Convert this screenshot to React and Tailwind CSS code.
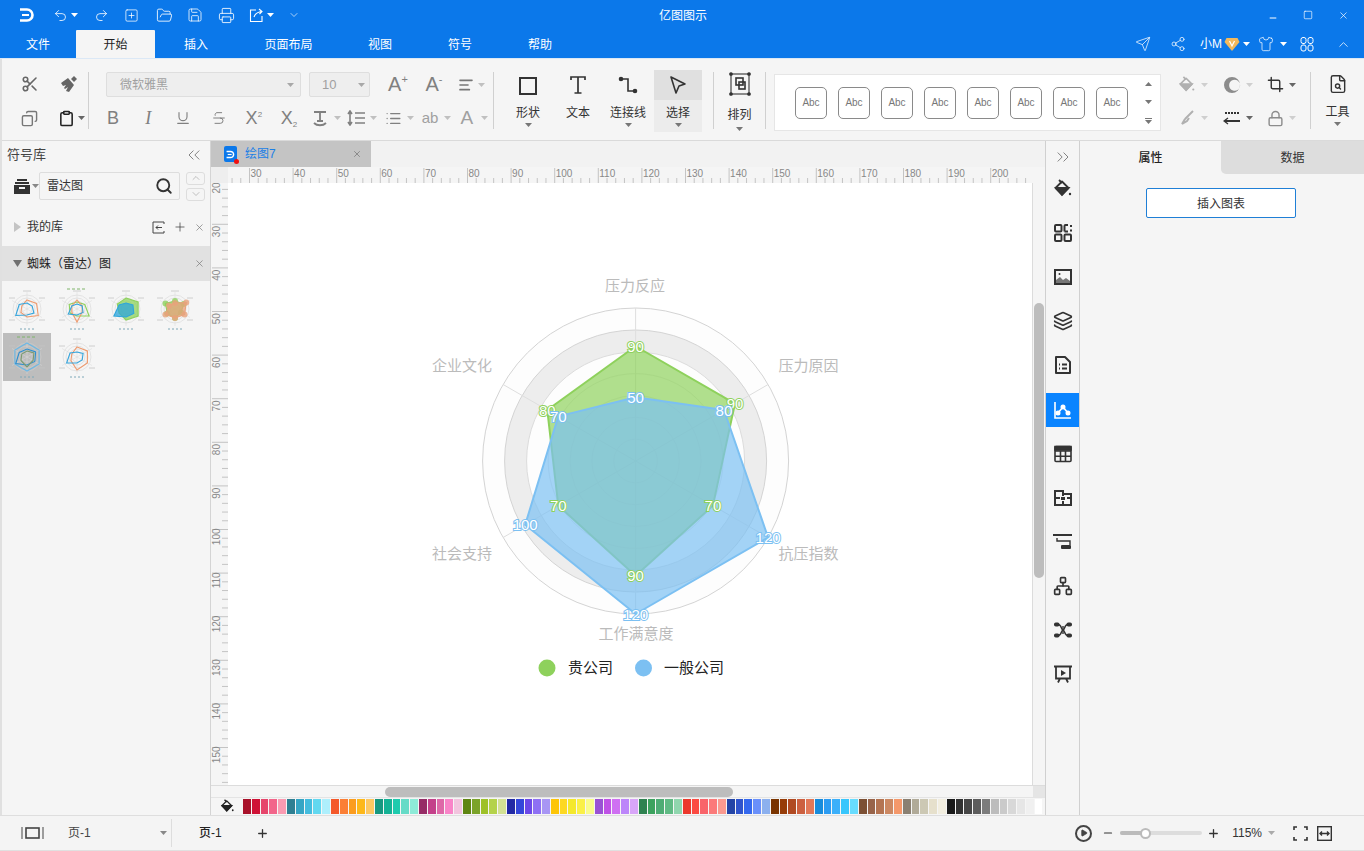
import {
    Scissors, Copy, Undo2, Redo2, SquarePlus, FolderOpen, Save, Printer, Send, Share2, Shirt, ChevronUp, Minus, Square, X,
    Underline, Strikethrough, AlignLeft, List, Search, ChevronsLeft, ChevronsRight, ChevronDown, Plus, Layers, Network,
    Crop, Lock, Clipboard, FileSearch, Play,
} from 'lucide-react';

const Caret = ({ className = 'fill-[#a8a8a8]' }) => (
    <svg width="7" height="4" viewBox="0 0 7 4" className={`shrink-0 ${className}`}><path d="M0 0h7L3.5 4z" /></svg>
);

const Logo = ({ size = 16, color = '#fff' }) => (
    <svg width={size} height={size} viewBox="0 0 16 16" fill="none" stroke={color} strokeWidth="2.6">
        <path d="M1 2.5h7a5.5 5.5 0 0 1 0 11H1" />
        <path d="M3 8h7" strokeWidth="2" />
    </svg>
);

const Bucket = ({ size = 20, color = '#333' }) => (
    <svg width={size} height={size} viewBox="0 0 20 20" fill="none" stroke={color} strokeWidth="1.8">
        <path d="M9 2.5 15.5 9 9 15.5 2.5 9z" strokeLinejoin="round" />
        <path d="M3 9h12.5L9 16z" fill={color} />
        <path d="M6 1l3 3" />
        <circle cx="17" cy="15" r="1.2" fill={color} stroke="none" />
    </svg>
);

// icons of the right strip
const IconGrid = () => (
    <svg width="20" height="20" viewBox="0 0 20 20" fill="none" stroke="#333" strokeWidth="2">
        <rect x="2" y="2" width="6.5" height="6.5" rx="1" />
        <rect x="2" y="11.5" width="6.5" height="6.5" rx="1" />
        <rect x="11.5" y="11.5" width="6.5" height="6.5" rx="1" />
        <path d="M11.5 8.5V3a1 1 0 0 1 1-1H15M18 2v2M18 6.5v2M11.5 8.5H15" />
    </svg>
);
const IconImage = () => (
    <svg width="20" height="20" viewBox="0 0 20 20" fill="none" stroke="#333" strokeWidth="2">
        <rect x="2" y="3" width="16" height="14" />
        <path d="M3 16v-3l4-3 3 3 3-2 4 3v2z" fill="#777" stroke="none" />
        <circle cx="6.5" cy="7" r="1" fill="#333" stroke="none" />
    </svg>
);
const IconDoc = () => (
    <svg width="20" height="20" viewBox="0 0 20 20" fill="none" stroke="#333" strokeWidth="2">
        <path d="M3 2h9l5 5v11H3z" strokeLinejoin="round" />
        <path d="M6 9.5h1M9 9.5h5M6 13.5h1M9 13.5h5" />
    </svg>
);
const IconChart = () => (
    <svg width="20" height="20" viewBox="0 0 20 20" fill="none" stroke="#fff" strokeWidth="1.6">
        <path d="M2 2v16h16" />
        <path d="M5 13l5-6 5 6" />
        <circle cx="5" cy="13" r="1.7" fill="#fff" />
        <circle cx="10" cy="7" r="1.7" fill="#fff" />
        <circle cx="15" cy="13" r="1.7" fill="#fff" />
    </svg>
);
const IconTable = () => (
    <svg width="20" height="20" viewBox="0 0 20 20" fill="none" stroke="#333" strokeWidth="1.6">
        <rect x="2" y="2.5" width="16" height="15" rx="1" />
        <path d="M2 7h16M2 12.2h16M7.500 7v10.500M12.500 7v10.500" />
        <path d="M2 2.5h16V6H2z" fill="#333" />
    </svg>
);
const IconBlocks = () => (
    <svg width="20" height="20" viewBox="0 0 20 20" fill="none" stroke="#333" strokeWidth="2">
        <path d="M2 3h8v3h8v11H2z" />
        <path d="M2 10h5M14 10h4M10 13v4M10 6v2" />
        <rect x="8" y="9" width="4" height="3" fill="#333" stroke="none" />
    </svg>
);
const IconGantt = () => (
    <svg width="20" height="20" viewBox="0 0 20 20" fill="none" stroke="#333" strokeWidth="2">
        <path d="M1 4V3h17v1" />
        <path d="M4 6v3h13v4" strokeWidth="1.4" />
        <rect x="8" y="13" width="10" height="4" rx="1" fill="#333" stroke="none" />
    </svg>
);
const IconMind = () => (
    <svg width="20" height="20" viewBox="0 0 20 20" fill="none" stroke="#333" strokeWidth="1.4">
        <path d="M5 4.500c4 0 3 5.500 5 5.500s1-5.500 5-5.500M5 15.500c4 0 3-5.500 5-5.500s1 5.500 5 5.500" />
        <path d="M10 6v8" />
        <rect x="1" y="2.500" width="5.500" height="4" rx="1.800" fill="#333" stroke="none" />
        <rect x="13.500" y="2.500" width="5.500" height="4" rx="1.800" fill="#333" stroke="none" />
        <rect x="1" y="13.500" width="5.500" height="4" rx="1.800" fill="#333" stroke="none" />
        <rect x="13.500" y="13.500" width="5.500" height="4" rx="1.800" fill="#333" stroke="none" />
    </svg>
);
const IconSlide = () => (
    <svg width="20" height="20" viewBox="0 0 20 20" fill="none" stroke="#333" strokeWidth="1.8">
        <path d="M1 2.5h18M3 2.5v12h14v-12M7 14.5l-2 4M13 14.5l2 4" />
        <path d="M8 6l5 3-5 3z" fill="#333" stroke="none" />
    </svg>
);

// small picture of a radar chart for the symbol library
function MiniRadar({ series, title = false, fill = false, dots = false }) {
    const pts = (vals) =>
        vals.map((v, i) => {
            const a = (Math.PI / 3) * i - Math.PI / 2;
            return [24 + Math.cos(a) * v, 24 + Math.sin(a) * v];
        });
    return (
        <svg width="48" height="48" viewBox="0 0 48 48" fill="none">
            {title && <path d="M14 4h20" stroke="#7fb46a" strokeWidth="1" strokeDasharray="3 2" />}
            {[14, 11, 8, 5].map((r) => <circle key={r} cx="24" cy="24" r={r} stroke="#d0d0d0" strokeWidth="0.5" />)}
            <path d="M24 7v34M9 15.500l30 17M9 32.500l30-17" stroke="#d8d8d8" strokeWidth="0.5" />
            <path d="M20 6h8M36 13h6M6 13h6M36 35h6M6 35h6" stroke="#c4c4c4" strokeWidth="0.8" />
            {series.map((s) => (
                <g key={s.color}>
                    <polygon points={pts(s.vals).map((p) => p.join(',')).join(' ')} stroke={s.color} strokeWidth="1.100" fill={fill ? s.color : 'none'} fillOpacity="0.75" />
                    {dots && pts(s.vals).map(([x, y], i) => <circle key={i} cx={x} cy={y} r="3" fill={s.color} fillOpacity="0.8" />)}
                </g>
            ))}
            <path d="M17 44h14" stroke="#7fa8b8" strokeWidth="1" strokeDasharray="2 2" />
        </svg>
    );
}

const thumbs = [
    { series: [{ color: '#ee9a6e', vals: [9, 11, 13, 8, 7, 6] }, { color: '#35a5dd', vals: [6, 6, 8, 6, 13, 9] }] },
    { title: true, series: [{ color: '#8ed15c', vals: [7, 9, 14, 7, 8, 9] }, { color: '#ee9a6e', vals: [9, 6, 6, 13, 6, 6] }, { color: '#35a5dd', vals: [5, 6, 7, 6, 10, 6] }] },
    { fill: true, series: [{ color: '#8ed15c', vals: [11, 14, 14, 11, 8, 10] }, { color: '#2ea6dc', vals: [6, 8, 9, 8, 14, 8] }] },
    { fill: true, dots: true, series: [{ color: '#8ed15c', vals: [8, 10, 7, 9, 9, 11] }, { color: '#e9a27c', vals: [6, 13, 11, 9, 11, 7] }] },
    { title: true, selected: true, series: [{ color: '#6ab8e6', vals: [14, 14, 14, 14, 14, 14] }, { color: '#2d8fd0', vals: [8, 10, 9, 8, 13, 9] }, { color: '#7a9a70', vals: [6, 8, 7, 10, 7, 6] }] },
    { series: [{ color: '#ee9a6e', vals: [10, 12, 12, 13, 7, 6] }, { color: '#35a5dd', vals: [5, 7, 6, 6, 12, 8] }] },
];

const palette = [
    '#a8112a', '#cf1236', '#e6456b', '#f2658a', '#fa9bb2',
    '#2f7f92', '#36a5c4', '#44bcde', '#62d8f0', '#aeeffc',
    '#f4582a', '#fb7f35', '#fb9c1e', '#fdb81a', '#fdc862',
    '#179880', '#14b295', '#1ecbae', '#66dbc7', '#8eead8',
    '#962c66', '#c4408a', '#de68a8', '#f984c8', '#f2c4de',
    '#5f8612', '#7ba32a', '#9ec128', '#b4d24a', '#d3e194',
    '#2229a5', '#3446da', '#6c48e8', '#8e70f4', '#a896f4',
    '#fdc507', '#fdd822', '#f4e82c', '#faf048', '#f9fc8c',
    '#9a52d4', '#bf52e6', '#cf70f2', '#bc86fa', '#d8a6f8',
    '#2e8250', '#3ca25e', '#4eac74', '#60ba84', '#90d6ae',
    '#ec382c', '#fb4a42', '#f9646a', '#fb7a7a', '#fa9a90',
    '#2344a6', '#2f54cc', '#3468ee', '#6a90fa', '#8cb0ee',
    '#7a3400', '#963c08', '#b04a22', '#cc6040', '#e27858',
    '#188cdc', '#2c9cf2', '#3cb0fa', '#38c6fc', '#68dcfe',
    '#7c5034', '#98644a', '#b47452', '#cc8862', '#f4986a',
    '#8a8072', '#b0aa98', '#ccc8b4', '#e6e0cc', '#f2eee0',
    '#1a1a1a', '#323232', '#464646', '#5c5c5c', '#7c7c7c', '#bcbcbc', '#cacaca', '#d8d8d8', '#e6e6e6', '#f0f0f0',
];

const tabs = [
    ['文件', 'w-[76px]'], ['开始', 'w-[79px]'], ['插入', 'w-[82px]'], ['页面布局', 'w-[103px]'], ['视图', 'w-[80px]'], ['符号', 'w-[80px]'], ['帮助', 'w-[80px]'],
];

function TitleBar() {
    return (
        <div className="relative h-[30px] bg-[#0b78ea] flex items-center text-white shrink-0">
            <div className="ml-[19px] w-[33px]"><Logo /></div>
            <div className="flex items-center ml-[1px] w-[42px]"><Undo2 size={15} strokeWidth={1.3} /><span className="ml-[3px]"><Caret className="fill-white" /></span></div>
            <div className="w-[27px]"><Redo2 size={15} strokeWidth={1.3} className="ml-[-1px]" /></div>
            <div className="w-[32px] ml-[2px]"><SquarePlus size={15} strokeWidth={1.2} /></div>
            <div className="w-[31px]"><FolderOpen size={17} strokeWidth={1.2} /></div>
            <div className="w-[31px]"><Save size={16} strokeWidth={1.2} /></div>
            <div className="w-[30px]"><Printer size={17} strokeWidth={1.2} /></div>
            <div className="flex items-center w-[39px] ml-[1px]">
                <svg width="15" height="15" viewBox="0 0 15 15" fill="none" stroke="#fff" strokeWidth="1.100">
                    <path d="M7 2H1.500v11.500H13V8" />
                    <path d="M5 9c1-3 3-5 8-5.500M10 1l3 2.500L10.500 6" />
                </svg>
                <span className="ml-[3px]"><Caret className="fill-white" /></span>
            </div>
            <ChevronDown size={12} strokeWidth={1.3} />
            <span className="absolute left-[659px] top-[8px] text-[12px] leading-[16px]">亿图图示</span>
            <div className="ml-auto flex items-center">
                <Minus size={10} strokeWidth={2.4} className="mr-[25px] mt-[5px]" />
                <Square size={10} strokeWidth={1.6} className="mr-[25px]" />
                <X size={11} strokeWidth={1.5} className="mr-[15px]" />
            </div>
        </div>
    );
}

function TabRow() {
    return (
        <div className="h-[28px] bg-[#0b78ea] flex items-end text-[12px] text-white shrink-0">
            {tabs.map(([label, w]) => (
                <div
                    key={label}
                    className={`${w} h-[28px] pt-[2px] flex items-center justify-center rounded-t-[1px] ${label === '开始' ? 'bg-[#f5f5f5] text-[#222]' : ''}`}
                >
                    {label}
                </div>
            ))}
            <div className="ml-auto h-[28px] flex items-center">
                <Send size={16} strokeWidth={1.1} />
                <Share2 size={16} strokeWidth={1.1} className="ml-[19px]" />
                <span className="ml-[14px]">小M</span>
                <svg width="16" height="15" viewBox="0 0 15 15" className="ml-[2px]">
                    <path d="M2 1h11l2 4-7.500 9L0 5z" fill="#f3b95c" />
                    <path d="M5 4l2.500 5L10 4" fill="none" stroke="#fff" strokeWidth="1.200" />
                </svg>
                <span className="ml-[3px]"><Caret className="fill-white" /></span>
                <Shirt size={16} strokeWidth={1.1} className="ml-[8px]" />
                <span className="ml-[6px]"><Caret className="fill-white" /></span>
                <svg width="14" height="16" viewBox="0 0 14 16" fill="none" stroke="#fff" className="ml-[13px]">
                    <rect x="1" y="1.500" width="5" height="6" rx="2" /><rect x="8" y="1.500" width="5" height="6" rx="2" />
                    <rect x="1" y="9" width="5" height="6" rx="2" /><rect x="8" y="9" width="5" height="6" rx="2" />
                </svg>
                <ChevronUp size={15} strokeWidth={1.2} className="ml-[22px] mr-[13px]" />
            </div>
        </div>
    );
}

const Sep = () => <div className="w-[1px] h-[57px] mt-[13px] bg-[#d0d0d0] shrink-0" />;

function Cell({ children, caret = false, gray = true }) {
    return (
        <div className={`w-[36.8px] h-[24px] flex items-center ${gray ? 'text-[#808080]' : 'text-[#333]'}`}>
            <div className="w-[26px] flex justify-center items-center">{children}</div>
            {caret && <span className="ml-[1px]"><Caret className="fill-[#c0c0c0]" /></span>}
        </div>
    );
}

function BigButton({ label, icon, active = false }) {
    return (
        <div className="w-[50px] flex flex-col items-center mt-[11px]">
            <div className={`w-[48px] h-[62px] flex flex-col items-center ${active ? 'bg-[#ececec]' : ''}`}>
                <div className={`w-[48px] h-[30px] flex items-center justify-center ${active ? 'bg-[#e0e0e0]' : ''}`}>{icon}</div>
                <div className="mt-[4px] h-[18px] text-[12px] leading-[18px] text-[#333] whitespace-nowrap">{label}</div>
                {label !== '文本' && <div className="mt-[1px]"><Caret className="fill-[#777]" /></div>}
            </div>
        </div>
    );
}

function Ribbon() {
    const fmtA = 'font-[\'Liberation_Sans\'] text-[#808080]';
    return (
        <div className="ml-[2px] h-[81px] bg-[#f5f5f5] flex shrink-0">
            <div className="w-[86px] pl-[8px] pt-[12px] shrink-0">
                <div className="flex h-[25px] items-center">
                    <div className="w-[40px] flex justify-center"><Scissors size={18} color="#666" strokeWidth={2.1} /></div>
                    <div className="w-[40px] flex justify-center">
                        <svg width="18" height="18" viewBox="0 0 18 18" fill="#666"><path d="M1 8l7-5 6 7-5 7-3-1 2-4-3 2-1-1 2-3-3 1z" /><path d="M11 4l3-3 3 3-3 3z" /></svg>
                    </div>
                </div>
                <div className="flex h-[24px] items-center mt-[10px]">
                    <div className="w-[40px] flex justify-center"><Copy size={17} color="#777" strokeWidth={2} className="-scale-x-100" /></div>
                    <div className="w-[40px] flex justify-center items-center"><Clipboard size={17} color="#222" strokeWidth={2.200} className="ml-[5px]" /><span className="ml-[3px]"><Caret className="fill-[#666]" /></span></div>
                </div>
            </div>
            <Sep />
            <div className="w-[404px] shrink-0 pt-[13px]">
                <div className="flex h-[25px] items-center pl-[17px]">
                    <div className="w-[195px] h-[25px] rounded-[2px] border border-[#dedede] bg-[#eeeeee] flex items-center pl-[13px] pr-[3px] text-[12px] text-[#a0a0a0]">
                        微软雅黑<span className="ml-auto mr-[3px]"><Caret /></span>
                    </div>
                    <div className="ml-[8px] w-[61px] h-[25px] rounded-[2px] border border-[#dedede] bg-[#eeeeee] flex items-center pl-[12px] text-[13px] text-[#a0a0a0] font-['Liberation_Sans']">
                        10<span className="ml-auto mr-[4px]"><Caret /></span>
                    </div>
                    <div className={`ml-[10px] w-[36px] text-center text-[20px] leading-[25px] ${fmtA}`}>A<sup className="text-[11px] top-[-8px]">+</sup></div>
                    <div className={`w-[36px] text-center text-[20px] leading-[25px] ${fmtA}`}>A<sup className="text-[11px] top-[-8px]">-</sup></div>
                    <div className="pl-[6px] flex items-center">
                        <AlignLeft size={16} color="#777" strokeWidth={2.500} />
                        <span className="ml-[4px]"><Caret className="fill-[#c0c0c0]" /></span>
                    </div>
                </div>
                <div className="flex h-[24px] items-center mt-[9px] pl-[6.5px]">
                    <div className={`w-[35.2px] text-center text-[18px] ${fmtA}`}>B</div>
                    <div className={`w-[35.2px] text-center text-[18px] italic font-['Liberation_Serif'] text-[#808080]`}>I</div>
                    <div className="w-[35.2px] flex justify-center"><Underline size={16} color="#808080" strokeWidth={1.700} /></div>
                    <div className="w-[35.2px] flex justify-center"><Strikethrough size={16} color="#808080" strokeWidth={1.500} /></div>
                    <div className={`w-[35.2px] text-center text-[18px] ${fmtA}`}>X<sup className="text-[8px] top-[-7px]">2</sup></div>
                    <div className={`w-[35.2px] text-center text-[18px] ${fmtA}`}>X<sub className="text-[8px] bottom-[-3px]">2</sub></div>
                    <Cell caret>
                        <svg width="16" height="17" viewBox="0 0 16 17" fill="none" stroke="#808080" strokeWidth="1.800">
                            <path d="M2 2h12M8 2v9M5 11h6M2 13c3 3 9 3 12 0" />
                        </svg>
                    </Cell>
                    <Cell caret>
                        <svg width="19" height="16" viewBox="0 0 19 16" fill="none" stroke="#808080" strokeWidth="1.600"><path d="M3 1v14M1 4l2-3 2 3M1 12l2 3 2-3M8 3h10M8 8h10M8 13h10" /></svg>
                    </Cell>
                    <Cell caret><List size={17} color="#808080" strokeWidth={1.800} /></Cell>
                    <Cell caret><span className="text-[15px] font-['Liberation_Sans'] text-[#a0a0a0]">ab</span></Cell>
                    <Cell caret><span className="text-[19px] font-['Liberation_Sans'] text-[#a0a0a0]">A</span></Cell>
                </div>
            </div>
            <Sep />
            <div className="w-[219px] pl-[9px] flex shrink-0">
                <BigButton label="形状" icon={<svg width="18" height="18" viewBox="0 0 18 18" fill="none" stroke="#333" strokeWidth="2" className="mt-[2px]"><rect x="1" y="1" width="16" height="16" /></svg>} />
                <BigButton
                    label="文本"
                    icon={
                        <svg width="18" height="20" viewBox="0 0 18 20" fill="none" stroke="#333" strokeWidth="1.700">
                            <path d="M2 5V2h14v3M9 2v16M5.500 18h7" />
                        </svg>
                    }
                />
                <BigButton
                    label="连接线"
                    icon={
                        <svg width="20" height="20" viewBox="0 0 20 20" fill="none" stroke="#333" strokeWidth="1.600">
                            <path d="M4 4h6v12h6" />
                            <circle cx="3" cy="4" r="1.500" fill="#333" />
                            <circle cx="17" cy="16" r="1.500" fill="#333" />
                        </svg>
                    }
                />
                <BigButton
                    active
                    label="选择"
                    icon={<svg width="20" height="20" viewBox="0 0 20 20" fill="none" stroke="#333" strokeWidth="1.600" strokeLinejoin="round"><path d="M3 2l14 7-6 2-3 7z" /></svg>}
                />
            </div>
            <Sep />
            <div className="w-[51px] flex flex-col items-center shrink-0 pt-[13px]">
                <svg width="22" height="24" viewBox="0 0 22 24" fill="none" stroke="#333" strokeWidth="1.100">
                    <rect x="2" y="2" width="18" height="20" />
                    <rect x="7" y="6" width="7" height="7" strokeWidth="1.600" />
                    <rect x="10" y="10" width="6" height="7" strokeWidth="1.600" />
                    <circle cx="2" cy="2" r="1.300" fill="#333" /><circle cx="20" cy="2" r="1.300" fill="#333" />
                    <circle cx="2" cy="22" r="1.300" fill="#333" /><circle cx="20" cy="22" r="1.300" fill="#333" />
                </svg>
                <div className="mt-[10px] text-[12px] leading-[18px] text-[#333]">排列</div>
                <div className="mt-[3px]"><Caret className="fill-[#777]" /></div>
            </div>
            <Sep />
            <div className="ml-[8px] mt-[15px] w-[387px] h-[57px] bg-white border border-[#e6e6e6] flex items-center pl-[20px] shrink-0">
                <div className="flex gap-[11px]">
                    {Array.from({ length: 8 }, (_, i) => (
                        <div key={i} className="w-[32px] h-[32px] rounded-[5px] border border-[#8a8a8a] flex items-center justify-center text-[10px] text-[#777] font-['Liberation_Sans']">Abc</div>
                    ))}
                </div>
                <div className="ml-[17px] h-[50px] flex flex-col items-center justify-between py-[4px]">
                    <Caret className="fill-[#777] rotate-180" />
                    <Caret className="fill-[#777]" />
                    <div className="flex flex-col items-center gap-[1px]"><div className="w-[7px] h-[1px] bg-[#777]" /><Caret className="fill-[#777]" /></div>
                </div>
            </div>
            <div className="w-[149px] pl-[5px] pt-[13px] shrink-0">
                <div className="flex h-[25px] items-center">
                    <div className="w-[44.5px] pl-[12px] flex items-center"><Bucket size={18} color="#b0b0b0" /><span className="ml-[5px]"><Caret className="fill-[#cfcfcf]" /></span></div>
                    <div className="w-[44.5px] pl-[12px] flex items-center">
                        <svg width="18" height="18" viewBox="0 0 18 18"><path d="M9 1a8 8 0 1 0 0 16A8 8 0 0 0 9 1zm1 3a5.500 5.500 0 1 1 0 10.500A5.500 5.500 0 0 1 10 4z" fill="#8c8c8c" fillRule="evenodd" /></svg>
                        <span className="ml-[5px]"><Caret className="fill-[#cfcfcf]" /></span>
                    </div>
                    <div className="w-[44.5px] pl-[12px] flex items-center"><Crop size={17} color="#333" strokeWidth={2} /><span className="ml-[5px]"><Caret className="fill-[#666]" /></span></div>
                </div>
                <div className="flex h-[24px] items-center mt-[9px]">
                    <div className="w-[44.5px] pl-[12px] flex items-center">
                        <svg width="18" height="18" viewBox="0 0 18 18" fill="none" stroke="#b0b0b0" strokeWidth="2"><path d="M15 2 7 10M7 10l-3 5 5-3 2-3" /></svg>
                        <span className="ml-[5px]"><Caret className="fill-[#cfcfcf]" /></span>
                    </div>
                    <div className="w-[44.5px] pl-[12px] flex items-center">
                        <svg width="18" height="16" viewBox="0 0 18 16" fill="none" stroke="#333"><path d="M2 3h14" strokeWidth="2" strokeDasharray="2 1" /><path d="M2 11h15" strokeWidth="2" /><path d="M5 8l-4 3 4 3" strokeWidth="1.300" /></svg>
                        <span className="ml-[5px]"><Caret className="fill-[#666]" /></span>
                    </div>
                    <div className="w-[44.5px] pl-[12px] flex items-center"><Lock size={17} color="#8c8c8c" strokeWidth={2} /><span className="ml-[5px]"><Caret className="fill-[#cfcfcf]" /></span></div>
                </div>
            </div>
            <Sep />
            <div className="w-[53px] flex flex-col items-center pt-[15px] shrink-0">
                <FileSearch size={20} color="#333" strokeWidth={1.700} />
                <div className="mt-[9px] text-[12px] leading-[18px] text-[#333]">工具</div>
                <div className="mt-[1px]"><Caret className="fill-[#777]" /></div>
            </div>
        </div>
    );
}

function SymbolPanel() {
    return (
        <div className="w-[209px] shrink-0 bg-[#f5f5f5] border-r border-[#d4d4d4] text-[12px] text-[#333]">
            <div className="h-[27px] flex items-center pl-[5px]">
                <span className="text-[13px] text-[#444]">符号库</span>
                <ChevronsLeft size={20} color="#777" strokeWidth={1.100} className="ml-auto mr-[6px]" />
            </div>
            <div className="h-[28px] flex items-center mt-[4px]">
                <svg width="16" height="15" viewBox="0 0 16 15" fill="#333" className="ml-[12px]"><path d="M3 0h10v2H3zM1 3h14v2H1z" /><path d="M0 6h16v9H0zM5 8v2h6V8z" fillRule="evenodd" /></svg>
                <span className="ml-[2px]"><Caret className="fill-[#888]" /></span>
                <div className="w-[141px] h-[28px] rounded-[2px] border border-[#dddddd] flex items-center pl-[7px] pr-[6px] text-[#333]">
                    雷达图
                    <Search size={18} color="#333" strokeWidth={2.500} className="ml-auto" />
                </div>
                <div className="ml-[6px] flex flex-col gap-[3px]">
                    <div className="w-[19px] h-[13px] rounded-[3px] border border-[#dddddd] flex items-center justify-center"><ChevronUp size={12} color="#888" strokeWidth={1} /></div>
                    <div className="w-[19px] h-[13px] rounded-[3px] border border-[#dddddd] flex items-center justify-center"><ChevronDown size={12} color="#888" strokeWidth={1} /></div>
                </div>
            </div>
            <div className="h-[46px] pt-[8px] flex items-center">
                <svg width="7" height="10" viewBox="0 0 7 10" fill="#c4c4c4" className="ml-[12px]"><path d="M0 0l7 5-7 5z" /></svg>
                <span className="ml-[6px]">我的库</span>
                <svg width="13" height="13" viewBox="0 0 13 13" fill="none" stroke="#444" className="ml-auto"><path d="M12 3V1H1v11h11v-2M10 6.500H4M6 4.500l-2 2 2 2" /></svg>
                <Plus size={14} color="#333" strokeWidth={1.200} className="ml-[8px]" />
                <X size={11} color="#777" strokeWidth={1.500} className="ml-[7px] mr-[5px]" />
            </div>
            <div className="h-[35px] bg-[#e1e1e1] flex items-center">
                <svg width="9" height="7" viewBox="0 0 9 7" fill="#707070" className="ml-[11px]"><path d="M0 0h9L4.500 7z" /></svg>
                <span className="ml-[5px] text-[#222]">蜘蛛（雷达）图</span>
                <X size={11} color="#777" strokeWidth={1.500} className="ml-auto mr-[5px]" />
            </div>
            <div className="mt-[4px] ml-[1px] grid grid-cols-4 w-[196px]">
                {thumbs.map((t, i) => (
                    <div key={i} className={`w-[48px] h-[48px] flex items-center justify-center ${t.selected ? 'bg-[#bdbdbd]' : ''} ${i > 0 && i % 4 ? 'ml-[1px]' : ''}`}>
                        <MiniRadar {...t} />
                    </div>
                ))}
            </div>
        </div>
    );
}

function HRuler() {
    const ticks = Array.from({ length: 93 }, (_, i) => i);
    return (
        <svg width="804" height="16" viewBox="228 0 804 16" className="block bg-[#f5f5f5]">
            {ticks.map((i) => {
                const x = 232.06 + i * 8.72;
                const major = (i - 2) % 5 === 0;
                return <line key={i} x1={x} x2={x} y1={major ? 1 : 11} y2="16" stroke="#b8b8b8" strokeWidth="0.8" />;
            })}
            {Array.from({ length: 18 }, (_, i) => (
                <text key={i} x={250.500 + i * 43.6} y="9.500" fontSize="10" fill="#888" fontFamily="Liberation Sans">{30 + i * 10}</text>
            ))}
        </svg>
    );
}

function VRuler() {
    const ticks = Array.from({ length: 70 }, (_, i) => i - 4);
    return (
        <svg width="17" height="602" viewBox="0 183 17 602" className="block bg-[#f5f5f5] shrink-0">
            {ticks.map((k) => {
                const y = 224.3 + k * 8.72;
                return <line key={k} x1={k % 5 === 0 ? 1 : 11} x2="17" y1={y} y2={y} stroke="#b8b8b8" strokeWidth="0.8" />;
            })}
            {Array.from({ length: 14 }, (_, i) => {
                const y = 188 + i * 43.6;
                return (
                    <text key={i} x="6.500" y={y} fontSize="10" fill="#888" textAnchor="middle" fontFamily="Liberation Sans" transform={`rotate(-90 6.500 ${y})`} dominantBaseline="middle">
                        {20 + i * 10}
                    </text>
                );
            })}
        </svg>
    );
}

const cx = 635.6;
const cy = 461;
const unit = 1.275;
const spoke = (i, r) => {
    const a = (Math.PI / 3) * i - Math.PI / 2;
    return [cx + Math.cos(a) * r, cy + Math.sin(a) * r];
};
const green = [90, 90, 70, 90, 70, 80];
const blue = [50, 80, 120, 120, 100, 70];
const axisLabels = [
    ['压力反应', 635, 286], ['压力原因', 808.500, 366], ['抗压指数', 808.500, 554], ['工作满意度', 636, 634], ['社会支持', 462, 554], ['企业文化', 462, 366],
];
const poly = (vals) => vals.map((v, i) => spoke(i, v * unit).join(',')).join(' ');

function RadarChart() {
    const valueText = (vals, stroke) =>
        vals.map((v, i) => {
            const [x, y] = spoke(i, v * unit);
            return (
                <text
                    key={`${stroke}${i}`}
                    x={x}
                    y={y + 5.500}
                    fontSize="15"
                    textAnchor="middle"
                    fill="#fff"
                    stroke={stroke}
                    strokeWidth="2"
                    paintOrder="stroke"
                    fontFamily="Liberation Sans"
                >
                    {v}
                </text>
            );
        });
    return (
        <svg width="460" height="420" viewBox="406 273 460 420" className="block ml-[178px] mt-[90px]" fontFamily="Noto Sans CJK SC">
            <circle cx={cx} cy={cy} r="153" fill="#fdfdfd" stroke="#d4d4d4" />
            <circle cx={cx} cy={cy} r="131" fill="#ededed" stroke="#d4d4d4" />
            <circle cx={cx} cy={cy} r="109" fill="#fdfdfd" stroke="#dcdcdc" />
            {[87.400, 65.500, 43.700, 21.800].map((r) => <circle key={r} cx={cx} cy={cy} r={r} fill="none" stroke="#e6e6e6" />)}
            {[0, 1, 2, 3, 4, 5].map((i) => {
                const [x, y] = spoke(i, 153);
                return <line key={i} x1={cx} y1={cy} x2={x} y2={y} stroke="#dedede" />;
            })}
            <polygon points={poly(green)} fill="#8ed15c" fillOpacity="0.7" stroke="#8ed15c" strokeWidth="2" strokeLinejoin="round" />
            <polygon points={poly(blue)} fill="#7cc0f2" fillOpacity="0.7" stroke="#7cc0f2" strokeWidth="2" strokeLinejoin="round" />
            {valueText(green, '#8ed15c')}
            {valueText(blue, '#7cc0f2')}
            {axisLabels.map(([t, x, y]) => (
                <text key={t} x={x} y={y + 5} fontSize="15" fill="#bbbbbb" textAnchor="middle">{t}</text>
            ))}
            <circle cx="547" cy="668" r="8.500" fill="#8ed15c" />
            <text x="568" y="673" fontSize="15" fill="#222">贵公司</text>
            <circle cx="643.500" cy="668" r="8.500" fill="#7cc0f2" />
            <text x="664" y="673" fontSize="15" fill="#222">一般公司</text>
        </svg>
    );
}

function CanvasArea() {
    return (
        <div className="w-[834px] shrink-0 flex flex-col">
            <div className="h-[26px] bg-[#f2f2f2] flex shrink-0">
                <div className="w-[160px] h-[26px] bg-[#c4c4c4] flex items-center">
                    <div className="relative ml-[13px] w-[13px] h-[16px] rounded-[2px] bg-[#0b78ea] flex items-center justify-center">
                        <Logo size={9} />
                        <div className="absolute right-[-2px] bottom-[-2px] w-[5px] h-[5px] rounded-full bg-[#f01010]" />
                    </div>
                    <span className="ml-[8px] text-[12px] text-[#1a7fe6]">绘图<span className="font-['Liberation_Sans']">7</span></span>
                    <X size={10} color="#666" strokeWidth={1.500} className="ml-auto mr-[9px]" />
                </div>
            </div>
            <div className="h-[16px] flex shrink-0 bg-[#f5f5f5]">
                <div className="w-[17px] bg-[#eeeeee]" />
                <HRuler />
            </div>
            <div className="h-[602px] flex shrink-0">
                <VRuler />
                <div className="w-[804px] h-[602px] bg-white overflow-hidden shrink-0"><RadarChart /></div>
                <div className="w-[13px] bg-[#f5f5f5] border-l border-[#dcdcdc]">
                    <div className="mt-[120px] ml-[1px] w-[10px] h-[275px] rounded-[5px] bg-[#bdbdbd]" />
                </div>
            </div>
            <div className="h-[12px] flex shrink-0 bg-[#f5f5f5] border-t border-[#dcdcdc]">
                <div className="ml-[174px] w-[348px] h-[10px] mt-[1px] rounded-[5px] bg-[#bdbdbd]" />
                <div className="ml-auto w-[12px] bg-[#e5e5e5]" />
            </div>
            <div className="h-[18px] flex items-center bg-[#f5f5f5] border-t border-[#e4e4e4] shrink-0">
                <div className="w-[32px] flex justify-center"><Bucket size={15} color="#222" /></div>
                <div className="flex gap-[1px]">
                    {palette.map((c, i) => (
                        <div key={`${c}${i}`} className="w-[7.800px] h-[15px]" style={{ backgroundColor: c }} />
                    ))}
                    <div className="w-[7px] h-[15px] bg-white" />
                </div>
            </div>
        </div>
    );
}

const stripIcons = [
    <Bucket key="a" />, <IconGrid key="b" />, <IconImage key="c" />, <Layers key="d" size={20} color="#333" strokeWidth={2} />, <IconDoc key="e" />,
    <IconChart key="f" />, <IconTable key="g" />, <IconBlocks key="h" />, <IconGantt key="i" />, <Network key="j" size={20} color="#333" strokeWidth={2} />, <IconMind key="k" />, <IconSlide key="l" />,
];

function RightStrip() {
    return (
        <div className="w-[35px] shrink-0 bg-[#f5f5f5] border-l border-r border-[#d0d0d0] flex flex-col items-center">
            <div className="h-[32px] flex items-center"><ChevronsRight size={20} color="#777" strokeWidth={1.100} /></div>
            <div className="w-[33px] mt-[-6px]">
                {stripIcons.map((icon, i) => (
                    <div key={i} className="h-[44.100px] flex items-center">
                        <div className={`w-[33px] h-[34px] flex items-center justify-center ${i === 5 ? 'bg-[#0a84ff]' : ''}`}>{icon}</div>
                    </div>
                ))}
            </div>
        </div>
    );
}

function PropertyPanel() {
    return (
        <div className="w-[284px] shrink-0 bg-[#f5f5f5] text-[12px]">
            <div className="flex h-[33px]">
                <div className="w-[141px] flex items-center justify-center font-medium text-[#222]">属性</div>
                <div className="w-[143px] pt-[1px] bg-[#dddddd] rounded-bl-[5px] flex items-center justify-center text-[#333]">数据</div>
            </div>
            <button className="block ml-[66px] mt-[14px] w-[150px] h-[30px] pt-[1px] bg-white border border-[#1f7fd6] rounded-[2px] text-[#333]">插入图表</button>
        </div>
    );
}

function StatusBar() {
    return (
        <div className="h-[35px] bg-[#f4f4f4] border-t border-[#dedede] flex items-center text-[12px] text-[#444] shrink-0">
            <div className="ml-[21px]">
                <svg width="23" height="12" viewBox="0 0 23 12" fill="none" stroke="#444"><path d="M1 0v12M22 0v12" /><rect x="5" y="1" width="13" height="10" strokeWidth="1.600" /></svg>
            </div>
            <span className="ml-[24px] w-[92px]">页-1</span>
            <Caret className="fill-[#888]" />
            <div className="ml-[4px] w-[1px] h-[28px] bg-[#dddddd]" />
            <span className="ml-[27px] text-[#222] font-medium">页-1</span>
            <Plus size={13} color="#333" strokeWidth={2.400} className="ml-[34px]" />
            <div className="ml-auto flex items-center">
                <div className="w-[17px] h-[17px] rounded-full border-2 border-[#444] flex items-center justify-center"><Play size={8} fill="#444" color="#444" /></div>
                <Minus size={12} color="#333" strokeWidth={2.400} className="ml-[10px]" />
                <div className="ml-[6px] w-[82px] h-[4px] rounded-full bg-[#dddddd] flex items-center">
                    <div className="w-[25px] h-[4px] rounded-full bg-[#bbbbbb]" />
                    <div className="w-[11px] h-[11px] rounded-full bg-white border-2 border-[#bbbbbb] ml-[-5px]" />
                </div>
                <Plus size={13} color="#333" strokeWidth={2.400} className="ml-[5px]" />
                <span className="ml-[12px] font-['Liberation_Sans'] text-[#333]">115%</span>
                <span className="ml-[6px]"><Caret className="fill-[#aaa]" /></span>
                <svg width="15" height="15" viewBox="0 0 15 15" fill="none" stroke="#333" strokeWidth="1.600" className="ml-[18px]"><path d="M1 4V1h3M11 1h3v3M14 11v3h-3M4 14H1v-3" /></svg>
                <svg width="15" height="15" viewBox="0 0 15 15" fill="none" stroke="#333" strokeWidth="1.400" className="ml-[9px] mr-[32px]"><rect x="0.700" y="0.700" width="13.600" height="13.600" /><path d="M3 7.500h9M5 5.500l-2 2 2 2M10 5.500l2 2-2 2" /></svg>
            </div>
        </div>
    );
}

export default function App() {
    return (
        <div className="w-[1364px] h-[851px] overflow-hidden flex flex-col bg-[#e0e0e0] font-['Liberation_Sans','Noto_Sans_CJK_SC',sans-serif]">
            <TitleBar />
            <TabRow />
            <div className="h-[1px] bg-[#dbe8f6] shrink-0" />
            <Ribbon />
            <div className="h-[675px] ml-[2px] flex border-t border-[#dadada] shrink-0">
                <SymbolPanel />
                <CanvasArea />
                <RightStrip />
                <PropertyPanel />
            </div>
            <StatusBar />
        </div>
    );
}
